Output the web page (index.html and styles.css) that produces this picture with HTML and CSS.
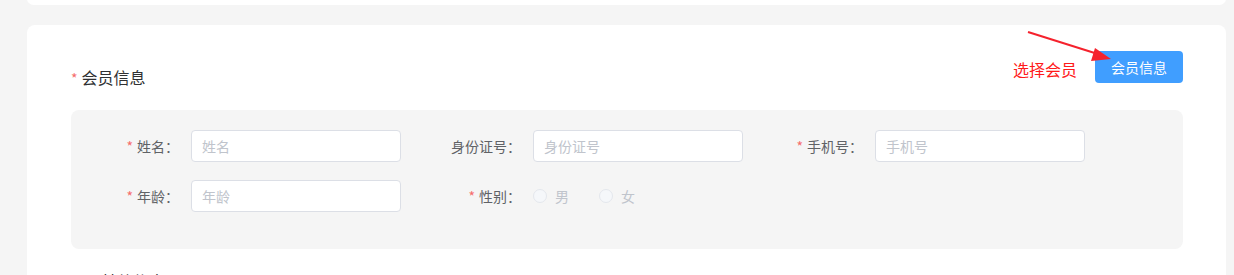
FILE: index.html
```html
<!DOCTYPE html>
<html lang="zh-CN">
<head>
<meta charset="utf-8">
<link rel="stylesheet" href="styles.css">
</head>
<body>
<div class="card card-top"></div>
<div class="card card-main">
  <svg class="arrow" width="100" height="40" viewBox="0 0 100 40">
    <line x1="1" y1="5" x2="74" y2="28" stroke="#f5222d" stroke-width="2"/>
    <polygon points="84,32 64,34 68,21" fill="#f5222d"/>
  </svg>
  <div class="header">
    <div class="title"><span class="req">*</span>会员信息</div>
    <div class="actions">
      <span class="hint">选择会员</span>
      <button class="btn">会员信息</button>
    </div>
  </div>
  <div class="panel">
    <div class="grid">
      <div class="item">
        <label class="label"><span class="req">*</span>姓名：</label>
        <input class="input" placeholder="姓名">
      </div>
      <div class="item">
        <label class="label">身份证号：</label>
        <input class="input" placeholder="身份证号">
      </div>
      <div class="item">
        <label class="label"><span class="req">*</span>手机号：</label>
        <input class="input" placeholder="手机号">
      </div>
      <div class="item">
        <label class="label"><span class="req">*</span>年龄：</label>
        <input class="input" placeholder="年龄">
      </div>
      <div class="item">
        <label class="label"><span class="req">*</span>性别：</label>
        <div class="radios">
          <span class="radio"><span class="circle"></span>男</span>
          <span class="radio"><span class="circle"></span>女</span>
        </div>
      </div>
    </div>
  </div>
  <div class="next-title">其他信息</div>
</div>
</body>
</html>
```

FILE: styles.css
```css
* { box-sizing: border-box; }
html, body { margin: 0; padding: 0; }
body {
  background: #f5f5f5;
  font-family: "Noto Sans CJK SC", "Noto Sans", sans-serif;
  color: #303133;
  overflow: hidden;
}
.card {
  background: #fff;
  border-radius: 8px;
  margin: 0 8px 0 27px;
  width: 1199px;
}
.card-top {
  height: 13px;
  margin-top: -8px;
}
.card-main {
  position: relative;
  margin-top: 20px;
  padding: 26px 43px 40px 44px;
}
.arrow {
  position: absolute;
  left: 1000px;
  top: 2px;
}
.header {
  display: flex;
  justify-content: space-between;
  align-items: flex-start;
}
.title {
  margin-top: 14px;
  font-size: 16px;
  line-height: 24px;
  color: #303133;
}
.req {
  color: #f56c6c;
  margin-right: 4px;
  font-size: 14px;
}
.actions {
  display: flex;
  align-items: flex-start;
}
.hint {
  color: #ff1a1a;
  font-size: 16px;
  line-height: 24px;
  margin-top: 6px;
  margin-right: 18px;
}
.btn {
  height: 32px;
  width: 88px;
  padding: 0 16px;
  border: none;
  border-radius: 4px;
  background: #409eff;
  color: #fff;
  font-family: inherit;
  font-size: 14px;
  line-height: 32px;
}
.panel {
  margin-top: 20px;
  background: #f5f5f5;
  border-radius: 8px;
  padding: 20px 0 37px;
}
.grid {
  display: grid;
  grid-template-columns: repeat(3, 342px);
  row-gap: 18px;
}
.item {
  display: flex;
  align-items: center;
  height: 32px;
}
.label {
  width: 120px;
  padding-right: 12px;
  text-align: right;
  font-size: 14px;
  color: #606266;
  line-height: 32px;
}
.input {
  width: 210px;
  height: 32px;
  border: 1px solid #dcdfe6;
  border-radius: 4px;
  background: #fff;
  padding: 0 10px;
  font-family: inherit;
  font-size: 14px;
  color: #606266;
  outline: none;
}
.input::placeholder { color: #c0c4cc; }
.radios {
  display: flex;
  align-items: center;
}
.radio {
  display: flex;
  align-items: center;
  font-size: 14px;
  color: #c0c4cc;
  margin-right: 30px;
}
.circle {
  width: 14px;
  height: 14px;
  border: 1px solid #e4e7ed;
  border-radius: 50%;
  background: #f5f7fa;
  margin-right: 8px;
}
.next-title {
  margin-top: 20px;
  padding-left: 30px;
  font-size: 16px;
  line-height: 24px;
  color: #303133;
}
```
